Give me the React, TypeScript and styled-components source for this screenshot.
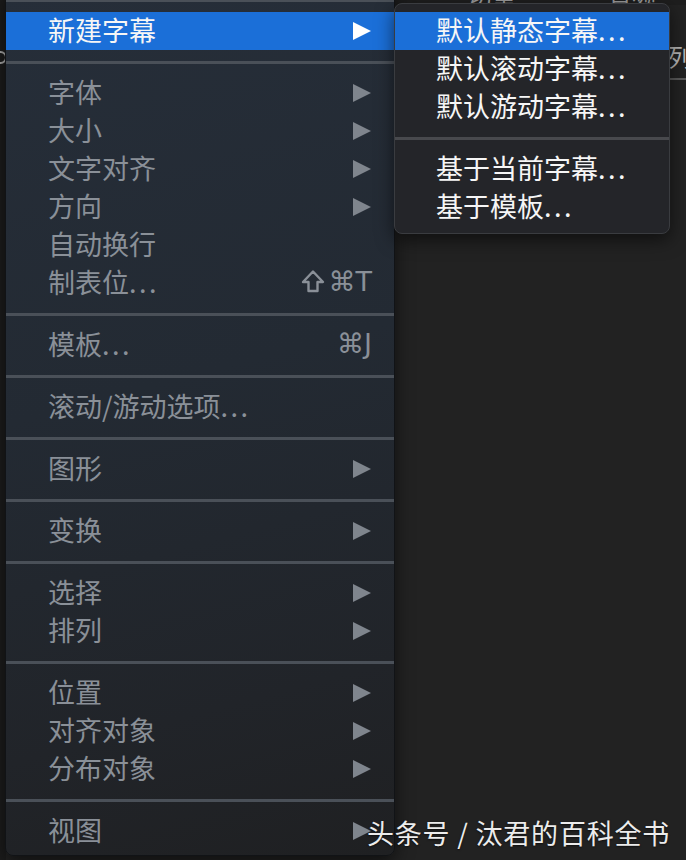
import * as React from 'react'
import styled, { createGlobalStyle } from 'styled-components'

type MenuEntry =
  | { kind: 'sep' }
  | { kind: 'item'; label: string; arrow?: boolean; active?: boolean; shortcut?: string; shift?: boolean }

const GlobalStyle = createGlobalStyle`
  html, body {
    margin: 0;
    padding: 0;
    background: #1b1b1b;
  }

  body {
    font-family: "Noto Sans CJK SC", "Liberation Sans", sans-serif;
  }
`

const Screen = styled.div`
  position: relative;
  display: flex;
  width: 686px;
  height: 860px;
  overflow: hidden;
  background: #222222;
`

const LeftRail = styled.div`
  display: flex;
  flex-direction: column;
  flex: 0 0 6px;
  padding-top: 51px;
  background: #1c1c1c;
  overflow: hidden;
`

const RailKnob = styled.div`
  width: 9px;
  height: 9px;
  margin-left: -6px;
  border: 2px solid #a8a8a8;
  border-radius: 50%;
`

const Workspace = styled.div`
  display: flex;
  flex-direction: column;
  flex: 1;
`

const TabStrip = styled.div`
  display: flex;
  align-items: flex-end;
  gap: 92px;
  height: 5px;
  padding-left: 462px;
  background: #1e1e1e;
  overflow: hidden;
`

const TabLabel = styled.span`
  flex: none;
  font-size: 24px;
  line-height: 24px;
  margin-bottom: -2px;
  color: #9a9a9a;
`

const ColumnHeader = styled.div`
  display: flex;
  align-items: flex-end;
  height: 75px;
  padding-bottom: 10px;
  margin-left: 663px;
  box-sizing: border-box;
  border-bottom: 2px solid #5a5a5a;
  overflow: hidden;
`

const ColumnLabel = styled.span`
  flex: none;
  font-size: 24px;
  line-height: 24px;
  color: #b5b5b5;
  margin-left: -1px;
`

const Menu = styled.div<{ $left: number; $top: number; $width: number; $sub?: boolean }>`
  position: absolute;
  left: ${p => p.$left}px;
  top: ${p => p.$top}px;
  width: ${p => p.$width}px;
  display: flex;
  flex-direction: column;
  padding: ${p => (p.$sub ? '8px 0 7px' : '0 0 5px')};
  box-sizing: border-box;
  border-radius: 8px;
  border: 1px solid ${p => (p.$sub ? '#3a3c40' : '#111316')};
  background: ${p =>
    p.$sub
      ? '#242529'
      : 'linear-gradient(165deg, #262e39 0%, #232a33 45%, #212429 80%, #1f2022 100%)'};
  box-shadow: 0 6px 18px rgba(0, 0, 0, 0.55);
  overflow: hidden;
`

const Row = styled.div<{ $active?: boolean; $sub?: boolean }>`
  display: flex;
  align-items: center;
  height: 38px;
  box-sizing: border-box;
  padding: 0 23px 2px ${p => (p.$sub ? 41 : 42)}px;
  font-size: 27px;
  line-height: 36px;
  white-space: nowrap;
  color: ${p => (p.$active || p.$sub ? '#f6f6f6' : '#8a9098')};
  background: ${p => (p.$active ? '#1b6fd8' : 'transparent')};
`

const Label = styled.span`
  flex: 1;
`

const Dots = styled.span`
  letter-spacing: 2.5px;
`

const Arrow = styled.span<{ $active?: boolean }>`
  width: 0;
  height: 0;
  margin-top: 2px;
  border-top: 9px solid transparent;
  border-bottom: 9px solid transparent;
  border-left: 18px solid ${p => (p.$active ? '#ffffff' : '#7f858d')};
`

const Shortcut = styled.span`
  display: flex;
  align-items: center;
  gap: 4px;
  font-family: "DejaVu Sans", "Noto Sans", sans-serif;
  font-size: 27px;
  margin-right: -1px;
`

const ShiftIcon = styled.svg`
  width: 24px;
  height: 24px;
  margin-top: -2px;
`

const Separator = styled.div<{ $sub?: boolean }>`
  display: flex;
  flex-direction: column;
  justify-content: center;
  height: 24px;

  &::before {
    content: '';
    display: block;
    height: 3px;
    background: ${p => (p.$sub ? '#48494d' : '#4a5058')};
  }
`

const Watermark = styled.div`
  position: absolute;
  left: 367px;
  top: 814px;
  font-size: 27px;
  line-height: 38px;
  letter-spacing: 0.8px;
  color: #ececec;
  white-space: nowrap;
  text-shadow: 0 1px 2px rgba(0, 0, 0, 0.6);
`

const sep: MenuEntry = { kind: 'sep' }
const item = (label: string, extra: Partial<Extract<MenuEntry, { kind: 'item' }>> = {}): MenuEntry => ({
  kind: 'item',
  label,
  ...extra,
})

const mainMenu: MenuEntry[] = [
  sep,
  item('新建字幕', { arrow: true, active: true }),
  sep,
  item('字体', { arrow: true }),
  item('大小', { arrow: true }),
  item('文字对齐', { arrow: true }),
  item('方向', { arrow: true }),
  item('自动换行'),
  item('制表位...', { shortcut: '⌘T', shift: true }),
  sep,
  item('模板...', { shortcut: '⌘J' }),
  sep,
  item('滚动/游动选项...'),
  sep,
  item('图形', { arrow: true }),
  sep,
  item('变换', { arrow: true }),
  sep,
  item('选择', { arrow: true }),
  item('排列', { arrow: true }),
  sep,
  item('位置', { arrow: true }),
  item('对齐对象', { arrow: true }),
  item('分布对象', { arrow: true }),
  sep,
  item('视图', { arrow: true }),
]

const subMenu: MenuEntry[] = [
  item('默认静态字幕...', { active: true }),
  item('默认滚动字幕...'),
  item('默认游动字幕...'),
  sep,
  item('基于当前字幕...'),
  item('基于模板...'),
]

const ItemLabel = ({ text }: { text: string }) => {
  const trimmed = text.endsWith('...') ? text.slice(0, -3) : text
  return (
    <Label>
      {trimmed}
      {trimmed !== text && <Dots>...</Dots>}
    </Label>
  )
}

const MenuRows = ({ entries, sub }: { entries: MenuEntry[]; sub?: boolean }) => (
  <>
    {entries.map((entry, i) =>
      entry.kind === 'sep' ? (
        <Separator key={i} $sub={sub} />
      ) : (
        <Row key={i} $active={entry.active} $sub={sub}>
          <ItemLabel text={entry.label} />
          {entry.shortcut && (
            <Shortcut>
              {entry.shift && (
                <ShiftIcon viewBox="0 0 24 24" fill="none" stroke="currentColor" strokeWidth="2.4" strokeLinejoin="round">
                  <path d="M12 2.5 L22 13 H16.5 V22 H7.5 V13 H2 Z" />
                </ShiftIcon>
              )}
              {entry.shortcut}
            </Shortcut>
          )}
          {entry.arrow && <Arrow $active={entry.active} />}
        </Row>
      )
    )}
  </>
)

export default function App() {
  return (
    <>
      <GlobalStyle />
      <Screen>
        <LeftRail>
          <RailKnob />
        </LeftRail>
        <Workspace>
          <TabStrip>
            <TabLabel>切量</TabLabel>
            <TabLabel>音频</TabLabel>
          </TabStrip>
          <ColumnHeader>
            <ColumnLabel>列</ColumnLabel>
          </ColumnHeader>
        </Workspace>

        <Menu $left={5} $top={-13} $width={390}>
          <MenuRows entries={mainMenu} />
        </Menu>

        <Menu $left={394} $top={3} $width={276} $sub>
          <MenuRows entries={subMenu} sub />
        </Menu>

        <Watermark>头条号 / 汰君的百科全书</Watermark>
      </Screen>
    </>
  )
}
